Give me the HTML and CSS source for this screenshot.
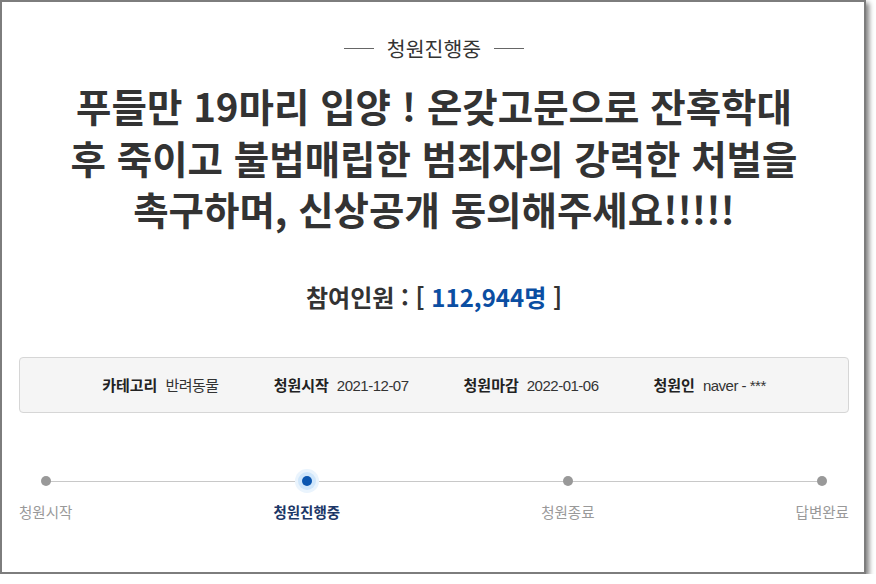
FILE: index.html
```html
<!DOCTYPE html>
<html lang="ko">
<head>
	<meta charset="UTF-8">
	<title>청원진행중</title>
	<link rel="stylesheet" href="styles.css">
</head>
<body>
	<div class="frame">
		<div class="petition">
			<div class="status"><span>청원진행중</span></div>
			<h3 class="subject">푸들만 19마리 입양 ! 온갖고문으로 잔혹학대 후 죽이고 불법매립한 범죄자의 강력한 처벌을 촉구하며, 신상공개 동의해주세요!!!!!</h3>
			<h2 class="count">참여인원 : [ <span>112,944명</span> ]</h2>
			<ul class="info">
				<li><strong>카테고리</strong>반려동물</li>
				<li><strong>청원시작</strong>2021-12-07</li>
				<li><strong>청원마감</strong>2022-01-06</li>
				<li><strong>청원인</strong>naver - ***</li>
			</ul>
			<ol class="steps">
				<li>청원시작</li>
				<li class="on">청원진행중</li>
				<li>청원종료</li>
				<li>답변완료</li>
			</ol>
		</div>
	</div>
</body>
</html>
```

FILE: styles.css
```css
* { margin: 0; padding: 0; box-sizing: border-box; }
body {
	background: #fff;
	font-family: "Noto Sans CJK KR", "Noto Sans", sans-serif;
	color: #333;
}
.frame {
	width: 866px;
	height: 574px;
	border: 2px solid #7d7d7d;
	box-shadow: 3px 3px 5px rgba(0,0,0,.5);
	background: #fff;
}
.petition {
	padding: 0 15px 0 17px;
}
.status {
	display: flex;
	justify-content: center;
	align-items: center;
	gap: 13px;
	margin-top: 32px;
	font-size: 20.5px;
	line-height: 28px;
	color: #333;
}
.status::before,
.status::after {
	content: '';
	width: 30px;
	height: 1px;
	background: #666;
}
.subject {
	width: 745px;
	margin: 18px auto 0;
	text-align: center;
	font-size: 38.5px;
	line-height: 51.5px;
	font-weight: bold;
	color: #333;
}
.count {
	margin-top: 46px;
	text-align: center;
	font-size: 24px;
	line-height: 32px;
	font-weight: bold;
	color: #333;
}
.count span {
	color: #0b4ea2;
}
.info {
	list-style: none;
	display: flex;
	justify-content: center;
	align-items: center;
	gap: 55px;
	height: 56px;
	margin-top: 44px;
	background: #f5f5f5;
	border: 1px solid #d6d6d6;
	border-radius: 4px;
	font: 15px "Liberation Sans", "Noto Sans CJK KR", sans-serif;
	letter-spacing: -.5px;
	color: #333;
}
.info strong {
	font-family: "Noto Sans CJK KR", sans-serif;
	letter-spacing: 0;
	margin-right: 8px;
	color: #222;
}
.steps {
	list-style: none;
	position: relative;
	display: flex;
	justify-content: space-between;
	margin-top: 57px;
	font-size: 14.5px;
	color: #999;
}
.steps::before {
	content: '';
	position: absolute;
	left: 27px;
	right: 27px;
	top: 11px;
	height: 1px;
	background: #c8c8c8;
}
.steps li {
	display: flex;
	flex-direction: column;
	align-items: center;
	gap: 15px;
	position: relative;
}
.steps li::before {
	content: '';
	width: 10px;
	height: 10px;
	margin-top: 6px;
	border-radius: 50%;
	background: #999;
}
.steps li.on {
	color: #1c3767;
	font-weight: bold;
}
.steps li.on::before {
	background: #0b56b0;
	box-shadow: 0 0 0 4px #cfe6fb, 0 0 0 7px #eaf4fd;
}
```
